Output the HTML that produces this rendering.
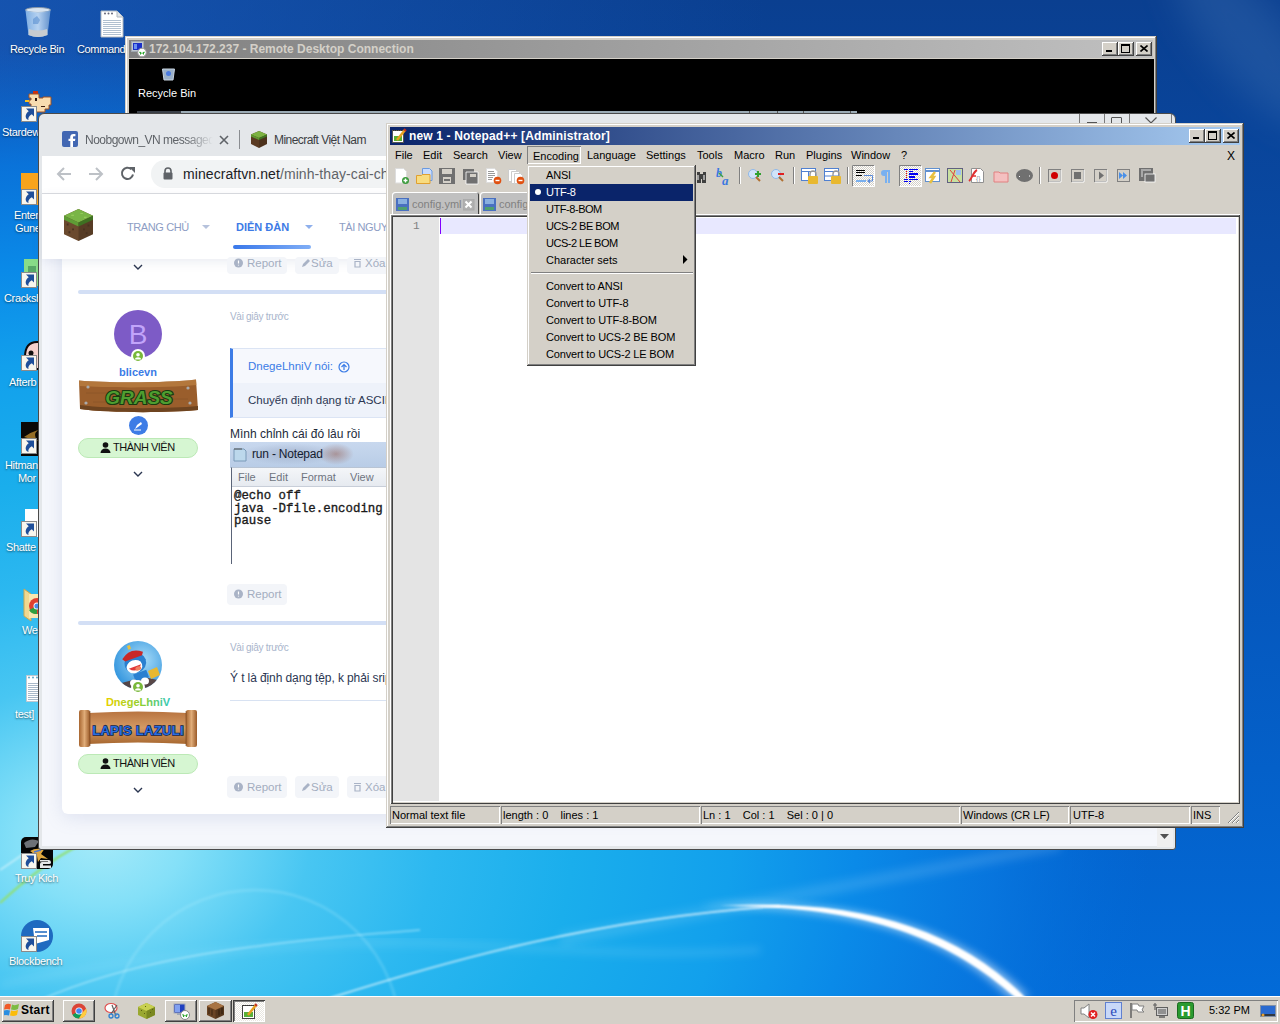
<!DOCTYPE html>
<html><head><meta charset="utf-8">
<style>
*{margin:0;padding:0;box-sizing:border-box}
html,body{width:1280px;height:1024px;overflow:hidden;font-family:"Liberation Sans",sans-serif;font-size:11px;background:#0d4aa6}
.a{position:absolute}
.t{position:absolute;white-space:nowrap;line-height:1}
.ic{position:absolute;width:80px;text-align:center;color:#fff;font-size:11px;line-height:13px;text-shadow:0 0 2px #000,0 1px 1px #000;white-space:nowrap}
.raised{background:#d4d0c8;box-shadow:inset -1px -1px #404040,inset 1px 1px #d4d0c8,inset -2px -2px #808080,inset 2px 2px #fff}
.tbtn{position:absolute;width:16px;height:14px;background:#d4d0c8;box-shadow:inset -1px -1px #404040,inset 1px 1px #fff,inset -2px -2px #808080}
.sc{position:absolute;width:16px;height:16px;background:#fff;border:1px solid #9aa;}
.sc:after{content:"";position:absolute;left:3px;top:3px;width:8px;height:8px;border-top:3px solid #1c5fb8;border-right:3px solid #1c5fb8;border-radius:0 6px 0 0}
</style></head><body>
<!-- DESKTOP BG -->
<svg class="a" style="left:0;top:0" width="1280" height="1024" viewBox="0 0 1280 1024">
<defs>
<linearGradient id="bg0" x1="0" y1="0" x2="0" y2="1">
<stop offset="0" stop-color="#0a3f90"/><stop offset="0.5" stop-color="#0654b8"/><stop offset="1" stop-color="#026cda"/></linearGradient>
<linearGradient id="bgl" x1="0" y1="0" x2="1" y2="0">
<stop offset="0" stop-color="#1a5cbc" stop-opacity="0.7"/><stop offset="0.6" stop-color="#1a5cbc" stop-opacity="0"/></linearGradient>
<radialGradient id="cy" cx="100" cy="840" r="1050" gradientUnits="userSpaceOnUse" gradientTransform="translate(100 840) scale(1 0.76) translate(-100 -840)">
<stop offset="0" stop-color="#a4eaf9"/><stop offset="0.08" stop-color="#84e0f8"/><stop offset="0.2" stop-color="#48c6f2"/><stop offset="0.32" stop-color="#2cb8f0"/><stop offset="0.45" stop-color="#1aaeec"/><stop offset="0.6" stop-color="#12a0ec"/><stop offset="0.72" stop-color="#0a8ae8"/><stop offset="0.85" stop-color="#0878e0" stop-opacity="0.85"/><stop offset="1" stop-color="#026cda" stop-opacity="0"/></radialGradient>
<filter id="bl"><feGaussianBlur stdDeviation="1.2"/></filter>
<filter id="bl4"><feGaussianBlur stdDeviation="4"/></filter>
</defs>
<rect width="1280" height="1024" fill="url(#bg0)"/>
<rect width="1280" height="1024" fill="url(#bgl)"/>
<rect width="1280" height="1024" fill="url(#cy)"/>
<circle cx="255" cy="1035" r="145" fill="none" stroke="#c8f4ff" stroke-opacity="0.18" stroke-width="3" filter="url(#bl)"/>
<path d="M0,985 C150,955 300,940 420,943 C550,948 650,958 760,950" fill="none" stroke="#c0eeff" stroke-opacity="0.2" stroke-width="5" filter="url(#bl4)"/><path d="M560,940 C700,915 880,880 1060,845" fill="none" stroke="#c0eeff" stroke-opacity="0.15" stroke-width="12" filter="url(#bl4)"/>
<path d="M40,1000 C120,965 220,945 420,930" fill="none" stroke="#d8f8ff" stroke-opacity="0.5" stroke-width="1.5" filter="url(#bl)"/><path d="M330,998 C450,960 600,918 780,906" fill="none" stroke="#fff" stroke-opacity="0.75" stroke-width="1.6" filter="url(#bl)"/>
<path d="M700,906 C850,896 960,925 1030,998 L1010,998 C945,935 860,908 700,906Z" fill="#fff" opacity="0.55" filter="url(#bl4)"/>
<path d="M720,906 C860,898 955,928 1026,998 L1016,998 C945,935 860,906 720,906Z" fill="#fff" filter="url(#bl)"/>
<path d="M0,903 C25,880 50,860 78,846" fill="none" stroke="#90e070" stroke-width="2" filter="url(#bl)"/>
<path d="M0,870 C15,860 30,850 45,838" fill="none" stroke="#fff" stroke-opacity="0.6" stroke-width="1.5" filter="url(#bl)"/>
<filter id="bl12" x="-200%" y="-100%" width="500%" height="300%"><feGaussianBlur stdDeviation="18"/></filter><ellipse cx="1250" cy="40" rx="40" ry="110" transform="rotate(-40 1250 40)" fill="#4a7ab8" opacity="0.3" filter="url(#bl12)"/>
</svg>

<!-- DESKTOP ICONS -->
<svg class="a" style="left:24px;top:7px" width="28" height="32" viewBox="0 0 28 32"><defs><linearGradient id="rb" x1="0" x2="1"><stop offset="0" stop-color="#8ab8e8"/><stop offset="0.5" stop-color="#c8e0f8"/><stop offset="1" stop-color="#6a98d0"/></linearGradient></defs><ellipse cx="14" cy="3" rx="12.5" ry="2.5" fill="#d8e4f0" stroke="#8898a8"/><path d="M1.5,3.5L4.5,28Q14,32 23.5,28L26.5,3.5Q14,7 1.5,3.5z" fill="url(#rb)" opacity="0.9"/><path d="M5,22Q14,25 23,22L23.5,28Q14,32 4.5,28z" fill="#c8ccd0"/><path d="M9,12l4,-3l3,4l-2,4l-5,0z" fill="#5a90d0" opacity="0.6"/></svg>
<div class="t" style="left:10px;top:44px;color:#fff;font-size:11px;letter-spacing:-0.35px;text-shadow:0 1px 2px rgba(0,0,0,.55)">Recycle Bin</div>
<svg class="a" style="left:100px;top:10px" width="24" height="28" viewBox="0 0 24 28"><path d="M1,1H17L23,7V27H1z" fill="#fff" stroke="#b0b8c0"/><path d="M17,1V7H23" fill="#e0e4e8" stroke="#b0b8c0"/><path d="M3,10.5H21M3,12.5H21M3,14.5H21M3,16.5H21M3,18.5H21M3,20.5H21M3,22.5H21M3,24.5H21" stroke="#b0c0d0" stroke-width="1"/><circle cx="5" cy="3.5" r="1" fill="#667"/><circle cx="8.5" cy="3.5" r="1" fill="#667"/><circle cx="12" cy="3.5" r="1" fill="#667"/></svg>
<div class="t" style="left:77px;top:44px;color:#fff;font-size:11px;letter-spacing:-0.35px;text-shadow:0 1px 2px rgba(0,0,0,.55)">Commands</div>
<svg class="a" style="left:23px;top:89px" width="30" height="26" viewBox="0 0 30 26"><path d="M10,2h5v3h-5z" fill="#d03010"/><path d="M6,5h10v4h4v-1h8v8h-2v4h-4v3h-10v-3h-4v-5h-2v-4h2v-2h-2z" fill="#f8dcb0" stroke="#a05020" stroke-width="1"/><path d="M2,11h4v2h-4z" fill="#f8c020"/><rect x="12" y="9" width="2" height="3" fill="#301810"/><path d="M18,17h4v1h-4z" fill="#402010"/></svg>
<div class="a" style="left:21px;top:106px;width:16px;height:16px;background:#f8f6ee;border:1px solid #8a8a8a"><svg style="position:absolute;left:0px;top:0px" width="14" height="14" viewBox="0 0 14 14"><path d="M4,1.5H12V9.5L9.8,7.3C7,9 5.8,11 6.5,13C3.5,12 3,9 4.5,6.5C5.2,5.5 6.2,4.6 6.8,4.3Z" fill="#1f4f9a"/></svg></div>
<div class="t" style="left:2px;top:127px;color:#fff;font-size:11px;letter-spacing:-0.35px;text-shadow:0 1px 2px rgba(0,0,0,.55)">Stardew</div>
<div class="a" style="left:21px;top:173px;width:20px;height:32px;background:#f8a41c"></div>
<div class="a" style="left:21px;top:189px;width:16px;height:16px;background:#f8f6ee;border:1px solid #8a8a8a"><svg style="position:absolute;left:0px;top:0px" width="14" height="14" viewBox="0 0 14 14"><path d="M4,1.5H12V9.5L9.8,7.3C7,9 5.8,11 6.5,13C3.5,12 3,9 4.5,6.5C5.2,5.5 6.2,4.6 6.8,4.3Z" fill="#1f4f9a"/></svg></div>
<div class="t" style="left:14px;top:210px;color:#fff;font-size:11px;letter-spacing:-0.35px;text-shadow:0 1px 2px rgba(0,0,0,.55)">Enter</div>
<div class="t" style="left:15px;top:223px;color:#fff;font-size:11px;letter-spacing:-0.35px;text-shadow:0 1px 2px rgba(0,0,0,.55)">Gune</div>
<div class="a" style="left:24px;top:259px;width:16px;height:27px;background:#88dc88"></div><div class="a" style="left:28px;top:266px;width:8px;height:16px;background:#58a868"></div>
<div class="a" style="left:21px;top:272px;width:16px;height:16px;background:#f8f6ee;border:1px solid #8a8a8a"><svg style="position:absolute;left:0px;top:0px" width="14" height="14" viewBox="0 0 14 14"><path d="M4,1.5H12V9.5L9.8,7.3C7,9 5.8,11 6.5,13C3.5,12 3,9 4.5,6.5C5.2,5.5 6.2,4.6 6.8,4.3Z" fill="#1f4f9a"/></svg></div>
<div class="t" style="left:4px;top:293px;color:#fff;font-size:11px;letter-spacing:-0.35px;text-shadow:0 1px 2px rgba(0,0,0,.55)">Cracksh</div>
<svg class="a" style="left:23px;top:339px" width="18" height="34" viewBox="0 0 18 34"><path d="M2,18Q2,3 14,3H18V30H2z" fill="#f4d0cc" stroke="#100808" stroke-width="2"/><circle cx="8" cy="14" r="2.5" fill="#101010"/></svg>
<div class="a" style="left:21px;top:355px;width:16px;height:16px;background:#f8f6ee;border:1px solid #8a8a8a"><svg style="position:absolute;left:0px;top:0px" width="14" height="14" viewBox="0 0 14 14"><path d="M4,1.5H12V9.5L9.8,7.3C7,9 5.8,11 6.5,13C3.5,12 3,9 4.5,6.5C5.2,5.5 6.2,4.6 6.8,4.3Z" fill="#1f4f9a"/></svg></div>
<div class="t" style="left:9px;top:377px;color:#fff;font-size:11px;letter-spacing:-0.35px;text-shadow:0 1px 2px rgba(0,0,0,.55)">Afterb</div>
<div class="a" style="left:21px;top:422px;width:18px;height:34px;background:#0a0806"></div><svg class="a" style="left:22px;top:428px" width="17" height="14"><path d="M2,9Q9,4 16,2Q10,7 16,13Q9,11 2,9z" fill="#b88830" opacity="0.8"/></svg>
<div class="a" style="left:21px;top:438px;width:16px;height:16px;background:#f8f6ee;border:1px solid #8a8a8a"><svg style="position:absolute;left:0px;top:0px" width="14" height="14" viewBox="0 0 14 14"><path d="M4,1.5H12V9.5L9.8,7.3C7,9 5.8,11 6.5,13C3.5,12 3,9 4.5,6.5C5.2,5.5 6.2,4.6 6.8,4.3Z" fill="#1f4f9a"/></svg></div>
<div class="t" style="left:5px;top:460px;color:#fff;font-size:11px;letter-spacing:-0.35px;text-shadow:0 1px 2px rgba(0,0,0,.55)">Hitman</div>
<div class="t" style="left:18px;top:473px;color:#fff;font-size:11px;letter-spacing:-0.35px;text-shadow:0 1px 2px rgba(0,0,0,.55)">Mor</div>
<div class="a" style="left:25px;top:509px;width:14px;height:28px;background:#fff"></div>
<div class="a" style="left:21px;top:521px;width:16px;height:16px;background:#f8f6ee;border:1px solid #8a8a8a"><svg style="position:absolute;left:0px;top:0px" width="14" height="14" viewBox="0 0 14 14"><path d="M4,1.5H12V9.5L9.8,7.3C7,9 5.8,11 6.5,13C3.5,12 3,9 4.5,6.5C5.2,5.5 6.2,4.6 6.8,4.3Z" fill="#1f4f9a"/></svg></div>
<div class="t" style="left:6px;top:542px;color:#fff;font-size:11px;letter-spacing:-0.35px;text-shadow:0 1px 2px rgba(0,0,0,.55)">Shatte</div>
<svg class="a" style="left:23px;top:588px" width="16" height="34" viewBox="0 0 16 34"><path d="M1,1L8,6V33L1,28z" fill="#f0d890" stroke="#c8a850"/><path d="M6,6H16V30H6z" fill="#f8e8b0"/><circle cx="14" cy="18" r="8" fill="#e04030"/><path d="M14,18L6,22A8,8 0 0 0 14,26z" fill="#30a040"/><circle cx="14" cy="18" r="3.5" fill="#fff"/><circle cx="14" cy="18" r="2.6" fill="#4a8ae8"/></svg>
<div class="t" style="left:22px;top:625px;color:#fff;font-size:11px;letter-spacing:-0.35px;text-shadow:0 1px 2px rgba(0,0,0,.55)">We</div>
<svg class="a" style="left:26px;top:675px" width="14" height="27" viewBox="0 0 14 27"><path d="M0.5,0.5H14V26.5H0.5z" fill="#fff" stroke="#c0c8d0"/><path d="M2,8.5H14M2,10.5H14M2,12.5H14M2,14.5H14M2,16.5H14M2,18.5H14M2,20.5H14M2,22.5H14M2,24.5H14" stroke="#a8b8c8" stroke-width="1"/><circle cx="3" cy="2.5" r="1" fill="#60a8c8"/><circle cx="7" cy="2.5" r="1" fill="#60a8c8"/><circle cx="11" cy="2.5" r="1" fill="#60a8c8"/></svg>
<div class="t" style="left:15px;top:709px;color:#fff;font-size:11px;letter-spacing:-0.35px;text-shadow:0 1px 2px rgba(0,0,0,.55)">test]</div>
<svg class="a" style="left:21px;top:837px" width="32" height="32" viewBox="0 0 32 32"><rect width="32" height="32" rx="5" fill="#050505"/><path d="M3,6Q10,0 18,4L14,10L5,11z" fill="#9aa0a8" opacity="0.7"/><path d="M9,14Q14,11 20,12L24,11L20,17L27,22L20,21L17,25L16,19z" fill="#e0a840"/><path d="M13,15L20,13" stroke="#4a78d0" stroke-width="1.5"/><path d="M19,23H28Q30,23 30,25.5Q30,27 28,27H22V28.5H30V31H19V27Q19,25 21,25H27V24.5H19z" fill="#e8e8e8"/></svg>
<div class="a" style="left:21px;top:853px;width:16px;height:16px;background:#f8f6ee;border:1px solid #8a8a8a"><svg style="position:absolute;left:0px;top:0px" width="14" height="14" viewBox="0 0 14 14"><path d="M4,1.5H12V9.5L9.8,7.3C7,9 5.8,11 6.5,13C3.5,12 3,9 4.5,6.5C5.2,5.5 6.2,4.6 6.8,4.3Z" fill="#1f4f9a"/></svg></div>
<div class="t" style="left:15px;top:873px;color:#fff;font-size:11px;letter-spacing:-0.35px;text-shadow:0 1px 2px rgba(0,0,0,.55)">Truy Kich</div>
<svg class="a" style="left:21px;top:920px" width="32" height="32" viewBox="0 0 32 32"><circle cx="16" cy="16" r="16" fill="#1e6ac0"/><path d="M12,8H28V20L14,24z" fill="#fff"/><path d="M14,12H26M16,16H26" stroke="#1e6ac0" stroke-width="1.5"/></svg>
<div class="a" style="left:21px;top:936px;width:16px;height:16px;background:#f8f6ee;border:1px solid #8a8a8a"><svg style="position:absolute;left:0px;top:0px" width="14" height="14" viewBox="0 0 14 14"><path d="M4,1.5H12V9.5L9.8,7.3C7,9 5.8,11 6.5,13C3.5,12 3,9 4.5,6.5C5.2,5.5 6.2,4.6 6.8,4.3Z" fill="#1f4f9a"/></svg></div>
<div class="t" style="left:9px;top:956px;color:#fff;font-size:11px;letter-spacing:-0.35px;text-shadow:0 1px 2px rgba(0,0,0,.55)">Blockbench</div>

<!-- RDP window -->
<div class="a raised" style="left:125px;top:36px;width:1032px;height:90px"></div>
<div class="a" style="left:129px;top:40px;width:1024px;height:18px;background:linear-gradient(90deg,#808080,#c0c0c0)"></div>
<div class="t" style="left:149px;top:43px;color:#d4d0c8;font-weight:bold;font-size:12px">172.104.172.237 - Remote Desktop Connection</div>
<div class="a" style="left:129px;top:59px;width:1025px;height:60px;background:#000"></div>
<div class="tbtn" style="left:1102px;top:42px"><div class="a" style="left:4px;top:8px;width:6px;height:2px;background:#000"></div></div>
<div class="tbtn" style="left:1118px;top:42px"><div class="a" style="left:3px;top:2px;width:9px;height:9px;border:1px solid #000;border-top-width:2px"></div></div>
<div class="tbtn" style="left:1136px;top:42px"><svg class="a" style="left:4px;top:3px" width="8" height="7"><path d="M0.5,0.5L7.5,6.5M7.5,0.5L0.5,6.5" stroke="#000" stroke-width="1.6"/></svg></div>
<div class="t" style="left:138px;top:88px;color:#fff;font-size:11px">Recycle Bin</div>
<svg class="a" style="left:162px;top:68px" width="13" height="13" viewBox="0 0 13 13"><path d="M0.5,1L2,12H11L12.5,1z" fill="#9ab0c8" stroke="#c8d4e0"/><circle cx="6.5" cy="5.5" r="2.5" fill="#4a7ae0"/></svg>
<svg class="a" style="left:131px;top:41px" width="16" height="16" viewBox="0 0 16 16"><rect x="0.5" y="0.5" width="12" height="10" fill="#c0c8d0" stroke="#a0a8b0"/><rect x="2" y="2" width="9" height="7" fill="#1a30c8"/><path d="M3,3h3v5h-3z" fill="#6a90f0"/><circle cx="11" cy="11.5" r="4.3" fill="#fff" stroke="#999"/><path d="M8.5,11l2,1.5M13.5,11l-2,1.5M9,13h1M12,13h1" stroke="#20a020" stroke-width="1.2"/></svg>
<div class="a" style="left:137px;top:111px;width:44px;height:2px;background:#3a4048"></div>
<div class="a" style="left:181px;top:111px;width:676px;height:2px;background:#9aaab4"></div><div class="a" style="left:749px;top:111px;width:1px;height:2px;background:#555"></div><div class="a" style="left:777px;top:111px;width:1px;height:2px;background:#555"></div><div class="a" style="left:803px;top:111px;width:1px;height:2px;background:#555"></div><div class="a" style="left:850px;top:111px;width:1px;height:2px;background:#555"></div>

<!-- Chrome window -->
<div class="a" style="left:38px;top:113px;width:1138px;height:737px;background:#e4e7ea;border:1px solid #4a4a4a;border-radius:6px 6px 3px 3px"></div>
<div class="a" style="left:41px;top:116px;width:1132px;height:40px;background:#e4e7ea;border-radius:4px 4px 0 0"></div>
<!-- chrome window buttons (behind npp) -->
<div class="a" style="left:1079px;top:114px;width:1px;height:10px;background:#7a7a7a"></div>
<div class="a" style="left:1104px;top:114px;width:1px;height:10px;background:#7a7a7a"></div>
<div class="a" style="left:1129px;top:114px;width:1px;height:10px;background:#7a7a7a"></div>
<div class="a" style="left:1171px;top:114px;width:1px;height:10px;background:#7a7a7a"></div>
<div class="a" style="left:1087px;top:122px;width:10px;height:1px;background:#555"></div>
<div class="a" style="left:1111px;top:117px;width:11px;height:8px;border:1px solid #555;border-radius:1px"></div>
<svg class="a" style="left:1145px;top:117px" width="12" height="7"><path d="M0.5,0.5L6,6L11.5,0.5" fill="none" stroke="#555" stroke-width="1.2"/></svg>
<!-- tabs -->
<svg class="a" style="left:62px;top:131px" width="16" height="16"><rect width="16" height="16" rx="2" fill="#4267b2"/><path d="M11,16V10h2l0.4,-2.3H11V6.3c0,-0.7 0.3,-1 1,-1h1.4V3.1c-0.3,0 -1.1,-0.1 -2,-0.1c-2,0 -3.2,1.2 -3.2,3.300V7.7H6.5V10h1.8v6z" fill="#fff"/></svg>
<div class="t" style="left:85px;top:134px;font-size:12px;letter-spacing:-0.5px;color:#5f6368;width:128px;height:16px;overflow:hidden;-webkit-mask-image:linear-gradient(90deg,#000 78%,transparent 100%)">Noobgown_VN messaged you</div>
<svg class="a" style="left:219px;top:135px" width="10" height="10"><path d="M1,1L9,9M9,1L1,9" stroke="#5f6368" stroke-width="1.6"/></svg>
<div class="a" style="left:239px;top:130px;width:1px;height:19px;background:#8a8d91"></div>
<svg class="a" style="left:251px;top:131px" width="16" height="17" viewBox="0 0 16 17"><path d="M8,0L16,3.5V13L8,17L0,13V3.5z" fill="#5a3a22"/><path d="M8,0L16,3.5L8,7L0,3.5z" fill="#7cb342"/><path d="M0,3.5L8,7V9L0,5.5z" fill="#5e9a30"/><path d="M16,3.5L8,7V9L16,5.5z" fill="#4a8a28"/><path d="M8,7V17L16,13V3.5z" fill="#000" opacity="0.15"/></svg>
<div class="t" style="left:274px;top:134px;font-size:12px;letter-spacing:-0.55px;color:#3c4043">Minecraft Việt Nam</div>
<!-- toolbar -->
<div class="a" style="left:42px;top:156px;width:1130px;height:38px;background:#fff;border-bottom:1px solid #dadce0"></div>
<svg class="a" style="left:56px;top:167px" width="16" height="14"><path d="M15,7H2M8,1L2,7L8,13" fill="none" stroke="#bdc1c6" stroke-width="2"/></svg>
<svg class="a" style="left:88px;top:167px" width="16" height="14"><path d="M1,7H14M8,1L14,7L8,13" fill="none" stroke="#bdc1c6" stroke-width="2"/></svg>
<svg class="a" style="left:120px;top:166px" width="16" height="15"><path d="M13,8.5A5.6,5.6 0 1 1 11.3,3.2" fill="none" stroke="#5f6368" stroke-width="2"/><path d="M9,1H15V7z" fill="#5f6368"/></svg>
<div class="a" style="left:151px;top:160px;width:1000px;height:28px;background:#f1f3f4;border-radius:14px"></div>
<svg class="a" style="left:163px;top:167px" width="10" height="13"><path d="M2,6V4a3,3 0 0 1 6,0v2" fill="none" stroke="#5f6368" stroke-width="1.6"/><rect x="0.5" y="5.5" width="9" height="7" rx="1" fill="#5f6368"/></svg>
<div class="t" style="left:183px;top:167px;font-size:14px;color:#202124;letter-spacing:0.08px">minecraftvn.net<span style="color:#5f6368">/minh-thay-cai-chi-ma-ko-chay</span></div>
<!-- page -->
<div class="a" style="left:42px;top:194px;width:1130px;height:652px;background:#f5f7fc;overflow:hidden">
  <div class="a" style="left:20px;top:0;width:1100px;height:620px;background:#fff;border-radius:0 0 6px 6px;box-shadow:0 4px 18px rgba(120,140,190,0.18)"></div>
</div>
<!-- header -->
<div class="a" style="left:42px;top:194px;width:1130px;height:65px;background:#fff;box-shadow:0 3px 10px rgba(90,110,160,0.12)"></div>
<svg class="a" style="left:64px;top:209px" width="29" height="32" viewBox="0 0 32 33" preserveAspectRatio="none"><path d="M16,0L32,7V26L16,33L0,26V7z" fill="#6b4a2e"/><path d="M16,0L32,7L16,14L0,7z" fill="#79b546"/><path d="M0,7L16,14V18L0,11z" fill="#5e9c35"/><path d="M32,7L16,14V18L32,11z" fill="#4c8a2a"/><path d="M16,14V33L32,26V7z" fill="#000" opacity="0.18"/><path d="M3,15h2v2h-2zM9,20h2v2h-2zM5,23h2v2h-2zM21,20h2v2h-2zM26,16h2v2h-2zM24,24h2v2h-2z" fill="#4a3220"/><path d="M8,6h3v1h-3zM18,4h3v1h-3zM22,8h3v1h-3z" fill="#9ad060"/></svg>
<div class="t" style="left:127px;top:222px;font-size:11px;color:#8d9dc4;letter-spacing:-0.4px">TRANG CHỦ</div>
<svg class="a" style="left:202px;top:225px" width="8" height="5"><path d="M0,0H8L4,4z" fill="#b6c2dc"/></svg>
<div class="t" style="left:236px;top:222px;font-size:11px;font-weight:bold;color:#3d7be6;letter-spacing:0px">DIỄN ĐÀN</div>
<svg class="a" style="left:305px;top:225px" width="8" height="5"><path d="M0,0H8L4,4z" fill="#8fb0ec"/></svg>
<div class="a" style="left:233px;top:245px;width:78px;height:4px;border-radius:2px;background:linear-gradient(90deg,#3a78ea,#80aef6)"></div>
<div class="t" style="left:339px;top:222px;font-size:11px;color:#8d9dc4;letter-spacing:-0.4px">TÀI NGUYÊN</div>

<!-- post 1 tail -->
<svg class="a" style="left:133px;top:264px" width="10" height="7"><path d="M1,1L5,5L9,1" fill="none" stroke="#2a3550" stroke-width="1.4"/></svg>
<div class="a" style="left:227px;top:257px;width:60px;height:17px;background:#f3f5f9;border-radius:4px"></div>
<div class="a" style="left:295px;top:257px;width:44px;height:17px;background:#f3f5f9;border-radius:4px"></div>
<div class="a" style="left:347px;top:257px;width:50px;height:17px;background:#f3f5f9;border-radius:4px"></div>
<svg class="a" style="left:234px;top:258px" width="10" height="10"><circle cx="4.5" cy="5" r="4.5" fill="#a9b3c6"/><path d="M4.5,2.5v3M4.5,6.8v0.8" stroke="#fff" stroke-width="1.2"/></svg>
<div class="t" style="left:247px;top:258px;font-size:11.5px;color:#a3adc0">Report</div>
<svg class="a" style="left:301px;top:258px" width="10" height="10"><path d="M1,9L2,6L7,1L9,3L4,8z" fill="#a9b3c6"/></svg>
<div class="t" style="left:311px;top:258px;font-size:11.5px;color:#a3adc0">Sửa</div>
<svg class="a" style="left:353px;top:258px" width="9" height="10"><path d="M1,1.5H8M2,3.5H7V9H2z" fill="none" stroke="#a9b3c6" stroke-width="1.2"/></svg>
<div class="t" style="left:365px;top:258px;font-size:11.5px;color:#a3adc0">Xóa</div>
<div class="a" style="left:78px;top:290px;width:320px;height:4px;border-radius:2px;background:#d3dff5"></div>

<!-- post 2 -->
<div class="a" style="left:114px;top:310px;width:48px;height:48px;border-radius:50%;background:#7d5bc6"></div>
<div class="t" style="left:114px;top:321px;width:48px;text-align:center;font-size:28px;color:#c2a4fa">B</div>
<div class="a" style="left:131px;top:349px;width:14px;height:14px;border-radius:50%;background:#fff"></div>
<svg class="a" style="left:133px;top:351px" width="10" height="10"><circle cx="5" cy="5" r="5" fill="#79b83a"/><circle cx="5" cy="3.8" r="1.8" fill="#fff"/><path d="M2,8.5a3,2.2 0 0 1 6,0z" fill="#fff"/></svg>
<div class="t" style="left:78px;top:367px;width:120px;text-align:center;font-size:11px;font-weight:bold;color:#3b7ce6">blicevn</div>
<svg class="a" style="left:78px;top:379px" width="120" height="34" viewBox="0 0 120 34">
<path d="M1,1.5C30,4 90,4 118,0.5L120,31C90,34 30,34 2,30Z" fill="#9a5e2c"/>
<path d="M1,1.5C30,4 90,4 118,0.5L118.5,6C90,9 30,9 1.5,7Z" fill="#c48848" opacity="0.6"/>
<path d="M2,26C30,30 90,30 120,27L120,31C90,34 30,34 2,30Z" fill="#6e4420"/>
<path d="M8,14H40M60,20H110M15,23H50" stroke="#8a5528" stroke-width="0.8"/>
<circle cx="10" cy="8" r="1.6" fill="#aaa"/><circle cx="110" cy="9" r="1.6" fill="#aaa"/><circle cx="8" cy="24" r="1.6" fill="#aaa"/><circle cx="112" cy="24" r="1.6" fill="#aaa"/>
<text x="61" y="25" text-anchor="middle" font-family="Liberation Sans" font-weight="bold" font-style="italic" font-size="19" fill="#4e9e30" stroke="#183a10" stroke-width="2.2" letter-spacing="0" paint-order="stroke">GRASS</text>
</svg>
<div class="a" style="left:129px;top:416px;width:19px;height:19px;border-radius:50%;background:#3d7ce6"></div>
<svg class="a" style="left:133px;top:420px" width="11" height="11"><path d="M2,9L4,5L8,2L9,4L5,7z" fill="#fff"/><path d="M1,10h7" stroke="#fff" stroke-width="1"/></svg>
<div class="a" style="left:78px;top:438px;width:120px;height:20px;border-radius:10px;background:#d6f6d2;border:1px solid #bce9b6"></div>
<svg class="a" style="left:100px;top:442px" width="11" height="11"><circle cx="5.5" cy="3" r="2.8" fill="#111"/><path d="M0.5,11a5,4.5 0 0 1 10,0z" fill="#111"/></svg>
<div class="t" style="left:113px;top:442px;font-size:11px;color:#111;letter-spacing:-0.5px">THÀNH VIÊN</div>
<svg class="a" style="left:133px;top:471px" width="10" height="7"><path d="M1,1L5,5L9,1" fill="none" stroke="#2a3550" stroke-width="1.4"/></svg>

<div class="t" style="left:230px;top:312px;font-size:10px;color:#a9b5cc;letter-spacing:-0.3px">Vài giây trước</div>
<div class="a" style="left:230px;top:348px;width:170px;height:70px;background:#eef2fa;border:1px solid #dbe4f4;border-left:3px solid #3d7ce6"></div>
<div class="a" style="left:233px;top:349px;width:167px;height:34px;background:#f6f8fd"></div>
<div class="t" style="left:248px;top:361px;font-size:11.5px;color:#3b7ce6;letter-spacing:0px">DnegeLhniV nói:</div>
<svg class="a" style="left:338px;top:361px" width="12" height="12"><circle cx="6" cy="6" r="5" fill="none" stroke="#3b7ce6" stroke-width="1.2"/><path d="M6,9V3.5M3.5,6L6,3.5L8.5,6" fill="none" stroke="#3b7ce6" stroke-width="1.2"/></svg>
<div class="t" style="left:248px;top:395px;font-size:11.5px;color:#2b3652;letter-spacing:0px">Chuyển định dạng từ ASCII</div>
<div class="t" style="left:230px;top:428px;font-size:12px;color:#222a3a;letter-spacing:0px">Mình chỉnh cái đó lâu rồi</div>
<!-- notepad screenshot -->
<div class="a" style="left:230px;top:442px;width:170px;height:26px;background:linear-gradient(180deg,#c8d8ee,#b8cce6)"></div>
<div class="a" style="left:240px;top:443px;width:100px;height:22px;background:radial-gradient(ellipse at 50% 50%,rgba(120,130,160,0.35),rgba(120,130,160,0) 70%)"></div>
<div class="a" style="left:318px;top:443px;width:36px;height:22px;background:radial-gradient(ellipse at 50% 50%,rgba(150,100,90,0.55),rgba(150,100,90,0) 70%)"></div>
<svg class="a" style="left:233px;top:447px" width="14" height="15"><path d="M1,2h10l2,2v10h-12z" fill="#bcd8ec" stroke="#7a9ab8"/><path d="M2,1v2M4,1v2M6,1v2M8,1v2" stroke="#555"/></svg>
<div class="t" style="left:252px;top:448px;font-size:12px;color:#141c30;letter-spacing:-0.2px">run - Notepad</div>
<div class="a" style="left:231px;top:467px;width:170px;height:97px;background:#fff;border-left:1px solid #5a6478;border-top:1px solid #b8c4d4"></div>
<div class="a" style="left:232px;top:468px;width:170px;height:19px;background:linear-gradient(#f4f6f9,#e6eaf0);border-bottom:1px solid #c8ced8"></div>
<div class="t" style="left:238px;top:472px;font-size:11px;color:#6e7480">File</div>
<div class="t" style="left:269px;top:472px;font-size:11px;color:#6e7480">Edit</div>
<div class="t" style="left:301px;top:472px;font-size:11px;color:#6e7480">Format</div>
<div class="t" style="left:350px;top:472px;font-size:11px;color:#6e7480">View</div>
<div class="t" style="left:234px;top:490px;font-size:12.4px;line-height:12.7px;font-family:'Liberation Mono',monospace;color:#1a1a1a;white-space:pre;-webkit-text-stroke:0.35px #1a1a1a">@echo off
java -Dfile.encoding
pause</div>
<div class="a" style="left:227px;top:584px;width:60px;height:21px;background:#f3f5f9;border-radius:4px"></div>
<svg class="a" style="left:234px;top:589px" width="10" height="10"><circle cx="4.5" cy="5" r="4.5" fill="#a9b3c6"/><path d="M4.5,2.5v3M4.5,6.8v0.8" stroke="#fff" stroke-width="1.2"/></svg>
<div class="t" style="left:247px;top:589px;font-size:11.5px;color:#a3adc0">Report</div>
<div class="a" style="left:78px;top:621px;width:320px;height:4px;border-radius:2px;background:#d3dff5"></div>

<!-- post 3 -->
<svg class="a" style="left:114px;top:641px" width="48" height="48" viewBox="0 0 48 48">
<defs><clipPath id="av"><circle cx="24" cy="24" r="24"/></clipPath><radialGradient id="avg" cx="0.6" cy="0.4" r="0.7"><stop offset="0" stop-color="#a8dcf8"/><stop offset="1" stop-color="#2a90dc"/></radialGradient></defs>
<g clip-path="url(#av)"><rect width="48" height="48" fill="url(#avg)"/>
<path d="M0,44L30,36L48,40V48H0z" fill="#5a3020" opacity="0.8"/>
<g transform="rotate(-20 22 24)">
<ellipse cx="22" cy="22" rx="11" ry="10" fill="#2a80d0"/><ellipse cx="20" cy="25" rx="8" ry="6.5" fill="#fff"/><path d="M14,25q6,8 13,0z" fill="#e03838"/><ellipse cx="23" cy="28" rx="3" ry="2" fill="#f08060"/>
<path d="M11,14q11,-9 22,0l-2,3h-18z" fill="#c82828"/><rect x="20" y="3" width="3" height="4" fill="#e8c040"/>
<rect x="16" y="32" width="14" height="8" fill="#2a80d0"/></g>
<path d="M34,30l9,-4l3,8l-9,4z" fill="#e8b830"/><ellipse cx="20" cy="42" rx="4" ry="3.5" fill="#fff"/><ellipse cx="31" cy="40" rx="4" ry="3.5" fill="#fff"/></g></svg>
<div class="a" style="left:131px;top:680px;width:14px;height:14px;border-radius:50%;background:#fff"></div>
<svg class="a" style="left:133px;top:682px" width="10" height="10"><circle cx="5" cy="5" r="5" fill="#79b83a"/><circle cx="5" cy="3.8" r="1.8" fill="#fff"/><path d="M2,8.5a3,2.2 0 0 1 6,0z" fill="#fff"/></svg>
<svg class="a" style="left:100px;top:694px" width="76" height="16"><defs><linearGradient id="ng" x1="0" x2="1"><stop offset="0" stop-color="#e8d000"/><stop offset="0.55" stop-color="#8ccf30"/><stop offset="1" stop-color="#30c8c0"/></linearGradient></defs><text x="38" y="12" text-anchor="middle" font-family="Liberation Sans" font-weight="bold" font-size="11" fill="url(#ng)" letter-spacing="0">DnegeLhniV</text></svg>
<svg class="a" style="left:78px;top:709px" width="120" height="39" viewBox="0 0 120 39">
<defs><linearGradient id="scr" x1="0" y1="0" x2="0" y2="1"><stop offset="0" stop-color="#b87440"/><stop offset="0.5" stop-color="#d49a64"/><stop offset="1" stop-color="#a86830"/></linearGradient>
<linearGradient id="rol" x1="0" y1="0" x2="1" y2="0"><stop offset="0" stop-color="#a86630"/><stop offset="0.5" stop-color="#e0ac78"/><stop offset="1" stop-color="#9a5a28"/></linearGradient></defs>
<path d="M10,4Q60,1 110,4V35Q60,32 10,35z" fill="url(#scr)"/>
<rect x="1" y="1" width="11" height="37" rx="2" fill="url(#rol)"/><rect x="108" y="1" width="11" height="37" rx="2" fill="url(#rol)"/>
<path d="M12,2V37M108,2V37" stroke="#6a3a18" stroke-width="0.8" opacity="0.7"/>
<text x="60" y="26" text-anchor="middle" font-family="Liberation Sans" font-weight="bold" font-size="13" fill="#2a6ee0" stroke="#0c2250" stroke-width="1.4" paint-order="stroke" letter-spacing="0.3">LAPIS LAZULI</text>
</svg>
<div class="a" style="left:78px;top:754px;width:120px;height:20px;border-radius:10px;background:#d6f6d2;border:1px solid #bce9b6"></div>
<svg class="a" style="left:100px;top:758px" width="11" height="11"><circle cx="5.5" cy="3" r="2.8" fill="#111"/><path d="M0.5,11a5,4.5 0 0 1 10,0z" fill="#111"/></svg>
<div class="t" style="left:113px;top:758px;font-size:11px;color:#111;letter-spacing:-0.5px">THÀNH VIÊN</div>
<svg class="a" style="left:133px;top:787px" width="10" height="7"><path d="M1,1L5,5L9,1" fill="none" stroke="#2a3550" stroke-width="1.4"/></svg>
<div class="t" style="left:230px;top:643px;font-size:10px;color:#a9b5cc;letter-spacing:-0.3px">Vài giây trước</div>
<div class="t" style="left:230px;top:672px;font-size:12px;color:#2b3652;letter-spacing:-0.1px">Ý t là định dạng tệp, k phải srip</div>
<div class="a" style="left:230px;top:700px;width:170px;height:1px;background:#d8e2f2"></div>
<div class="a" style="left:227px;top:776px;width:60px;height:22px;background:#f3f5f9;border-radius:4px"></div>
<div class="a" style="left:295px;top:776px;width:44px;height:22px;background:#f3f5f9;border-radius:4px"></div>
<div class="a" style="left:347px;top:776px;width:50px;height:22px;background:#f3f5f9;border-radius:4px"></div>
<svg class="a" style="left:234px;top:782px" width="10" height="10"><circle cx="4.5" cy="5" r="4.5" fill="#a9b3c6"/><path d="M4.5,2.5v3M4.5,6.8v0.8" stroke="#fff" stroke-width="1.2"/></svg>
<div class="t" style="left:247px;top:782px;font-size:11.5px;color:#a3adc0">Report</div>
<svg class="a" style="left:301px;top:782px" width="10" height="10"><path d="M1,9L2,6L7,1L9,3L4,8z" fill="#a9b3c6"/></svg>
<div class="t" style="left:311px;top:782px;font-size:11.5px;color:#a3adc0">Sửa</div>
<svg class="a" style="left:353px;top:782px" width="9" height="10"><path d="M1,1.5H8M2,3.5H7V9H2z" fill="none" stroke="#a9b3c6" stroke-width="1.2"/></svg>
<div class="t" style="left:365px;top:782px;font-size:11.5px;color:#a3adc0">Xóa</div>
<!-- scrollbar bottom arrow -->
<div class="a" style="left:1157px;top:826px;width:16px;height:21px;background:#efefef"></div>
<svg class="a" style="left:1160px;top:834px" width="9" height="6"><path d="M0,0H9L4.5,5z" fill="#505050"/></svg>

<!-- Notepad++ -->
<div class="a raised" style="left:386px;top:123px;width:858px;height:705px"></div>
<div class="a" style="left:390px;top:127px;width:850px;height:18px;background:linear-gradient(90deg,#0a246a,#a6caf0)"></div>
<svg class="a" style="left:391px;top:128px" width="16" height="16" viewBox="0 0 16 16">
<rect x="1.5" y="2.5" width="11" height="12" fill="#fff" stroke="#555"/>
<rect x="3" y="8" width="8" height="5" fill="#5ab030"/>
<path d="M2,2.5h10" stroke="#333" stroke-dasharray="1 1"/>
<path d="M6,12 L14,2" stroke="#e8a020" stroke-width="2.5"/><path d="M13,1 L15,3" stroke="#c03020" stroke-width="2"/>
</svg>
<div class="t" style="left:409px;top:130px;color:#fff;font-weight:bold;font-size:12px;letter-spacing:0.15px">new 1 - Notepad++ [Administrator]</div>
<div class="tbtn" style="left:1189px;top:129px"><div class="a" style="left:4px;top:8px;width:6px;height:2px;background:#000"></div></div>
<div class="tbtn" style="left:1205px;top:129px"><div class="a" style="left:3px;top:2px;width:9px;height:9px;border:1px solid #000;border-top-width:2px"></div></div>
<div class="tbtn" style="left:1223px;top:129px"><svg class="a" style="left:4px;top:3px" width="8" height="7"><path d="M0.5,0.5L7.5,6.5M7.5,0.5L0.5,6.5" stroke="#000" stroke-width="1.6"/></svg></div>
<!-- menubar -->
<div class="t" style="left:395px;top:150px">File</div>
<div class="t" style="left:423px;top:150px">Edit</div>
<div class="t" style="left:453px;top:150px">Search</div>
<div class="t" style="left:498px;top:150px">View</div>
<div class="a" style="left:527px;top:146px;width:54px;height:18px;box-shadow:inset 1px 1px #808080,inset -1px -1px #fff"></div>
<div class="t" style="left:533px;top:151px">Encoding</div>
<div class="t" style="left:587px;top:150px">Language</div>
<div class="t" style="left:646px;top:150px">Settings</div>
<div class="t" style="left:697px;top:150px">Tools</div>
<div class="t" style="left:734px;top:150px">Macro</div>
<div class="t" style="left:775px;top:150px">Run</div>
<div class="t" style="left:806px;top:150px">Plugins</div>
<div class="t" style="left:851px;top:150px">Window</div>
<div class="t" style="left:901px;top:150px">?</div>
<div class="t" style="left:1227px;top:150px;font-size:12px">X</div>
<!-- toolbar -->
<svg class="a" style="left:386px;top:164px" width="780" height="26" viewBox="386 164 780 26">
<defs><pattern id="chk" width="2" height="2" patternUnits="userSpaceOnUse"><rect width="2" height="2" fill="#fff"/><rect width="1" height="1" fill="#d4d0c8"/><rect x="1" y="1" width="1" height="1" fill="#d4d0c8"/></pattern></defs>
<!-- new -->
<path d="M395.5,168.5h8l3,3v11.5h-11z" fill="#fff" stroke="#ddd"/>
<circle cx="405.5" cy="180.5" r="3.5" fill="#3a9a3a"/><path d="M403.5,180.5h4M405.5,178.5v4" stroke="#fff" stroke-width="1.4"/>
<!-- open -->
<path d="M422.5,168.5h7l2.5,2.5v9.5h-9.5z" fill="#c8dcff" stroke="#6a9ae0"/>
<path d="M416.5,175.5h5l1,-1h7.5v9h-13.5z" fill="#f8dc80" stroke="#e0a030"/>
<!-- save -->
<path d="M439,168h16v16h-16z" fill="#707070"/><rect x="442" y="169" width="10" height="5" fill="#d4d0c8"/><rect x="443" y="177" width="8" height="6" fill="#d4d0c8"/><rect x="444" y="179" width="6" height="2" fill="#707070"/>
<!-- save all -->
<path d="M463,169h11v11h-11z" fill="#707070"/><path d="M466,172h12v12h-12z" fill="#707070" stroke="#fff" stroke-width="0.8"/><rect x="470" y="174" width="6" height="3" fill="#d4d0c8"/>
<!-- close -->
<path d="M486.5,168.5h8l3,3v11h-11z" fill="#fff" stroke="#ddd"/><path d="M488,171.5h6M488,173.5h7M488,175.5h7M488,177.5h5M488,179.5h4" stroke="#9a9a9a" stroke-width="1"/>
<circle cx="497.5" cy="180.5" r="3.8" fill="#e05010"/><path d="M495.5,180.5h4" stroke="#fff" stroke-width="1.4"/>
<!-- close all -->
<path d="M508.5,169.5h7l2,2v10h-9z" fill="#fff" stroke="#ccc"/><path d="M511.5,171.5h7l2,2v10h-9z" fill="#fff" stroke="#ccc"/><path d="M514.5,173.5h6l2,2v8h-8z" fill="#fff" stroke="#ccc"/>
<circle cx="520.5" cy="180.5" r="3.8" fill="#e05010"/><path d="M518.5,180.5h4" stroke="#fff" stroke-width="1.4"/>
<!-- find (binoculars) -->
<path d="M697,172h3v2h3v-2h3v11h-4v-4h-1v4h-4z" fill="#404040"/><rect x="697" y="175" width="2" height="5" fill="#a0a0a0"/><rect x="703" y="175" width="2" height="5" fill="#a0a0a0"/>
<!-- replace -->
<text x="716" y="177" font-family="Liberation Serif" font-style="italic" font-weight="bold" font-size="12" fill="#3a78e0">b</text><text x="722" y="185" font-family="Liberation Serif" font-style="italic" font-weight="bold" font-size="13" fill="#3a78e0">a</text><path d="M719,173l4,4" stroke="#40a040" stroke-width="1.5"/>
<path d="M739.5,167v17" stroke="#808080"/><path d="M740.5,167v17" stroke="#fff"/>
<!-- zoom in / out -->
<circle cx="753" cy="174" r="4.5" fill="#d0e4fa" stroke="#90b8e8"/><path d="M756,177l4,4" stroke="#b07030" stroke-width="2"/><path d="M755,174h6M758,171v6" stroke="#30a030" stroke-width="2"/>
<circle cx="776" cy="174" r="4.5" fill="#d0e4fa" stroke="#90b8e8"/><path d="M779,177l4,4" stroke="#b07030" stroke-width="2"/><path d="M778,174h6" stroke="#e02020" stroke-width="2"/>
<path d="M793.5,167v17" stroke="#808080"/><path d="M794.5,167v17" stroke="#fff"/>
<!-- sync -->
<rect x="801.5" y="168.5" width="14" height="12" fill="#fff" stroke="#5080d0"/><path d="M801.5,171.5h14M808.5,171.5v9" stroke="#5080d0"/>
<rect x="808" y="176" width="10" height="8" rx="1" fill="#e8b830"/><path d="M810,176v-2a3,3 0 0 1 6,0v2" fill="none" stroke="#999" stroke-width="1.4"/>
<rect x="824.5" y="168.5" width="14" height="12" fill="#fff" stroke="#5080d0"/><path d="M824.5,171.5h14M824.5,176h14" stroke="#5080d0"/>
<rect x="831" y="176" width="10" height="8" rx="1" fill="#e8b830"/><path d="M833,176v-2a3,3 0 0 1 6,0v2" fill="none" stroke="#999" stroke-width="1.4"/>
<path d="M847.5,167v17" stroke="#808080"/><path d="M848.5,167v17" stroke="#fff"/>
<!-- wrap pressed -->
<rect x="852" y="165" width="23" height="22" fill="url(#chk)"/><path d="M852.5,186.5v-21h22" fill="none" stroke="#808080"/><path d="M852.5,186.5h22v-21" fill="none" stroke="#fff"/>
<rect x="856" y="170" width="9" height="1" fill="#000"/><rect x="856" y="172" width="9" height="1" fill="#000"/><rect x="856" y="175" width="6" height="1" fill="#000"/>
<rect x="856" y="180" width="10" height="2" fill="#7ab0ee"/><path d="M864,175.5h8.5v5.5h-4" fill="none" stroke="#5a8ad8" stroke-width="1"/><path d="M870,178.5l-3,2.5l3,2.5z" fill="#5a8ad8"/>
<!-- pilcrow -->
<path d="M884,170h6v13h-2v-11h-1v11h-2v-7h-1a3,3 0 0 1 0,-6z" fill="#78b0f0"/>
<!-- indent guide pressed -->
<rect x="899" y="165" width="23" height="22" fill="url(#chk)"/><path d="M899.5,186.5v-21h22" fill="none" stroke="#808080"/><path d="M899.5,186.5h22v-21" fill="none" stroke="#fff"/>
<g fill="#0000f0"><rect x="904" y="169" width="4" height="1"/><rect x="909" y="169" width="9" height="1"/><rect x="909" y="171" width="4" height="1"/><rect x="909" y="173" width="9" height="2"/><rect x="909" y="176" width="6" height="2"/><rect x="904" y="179" width="4" height="1"/><rect x="909" y="179" width="9" height="1"/><rect x="904" y="181" width="4" height="1"/><rect x="909" y="181" width="2" height="1"/><rect x="909" y="183" width="1" height="1"/></g>
<g fill="#f00000"><rect x="906" y="171" width="1" height="1"/><rect x="906" y="173" width="1" height="1"/><rect x="906" y="175" width="1" height="1"/><rect x="906" y="177" width="1" height="1"/></g>
<!-- UDL -->
<rect x="925.5" y="168.5" width="14" height="13" fill="#fff" stroke="#6090d0"/><path d="M925.5,171h14" stroke="#6090d0" stroke-width="2"/><path d="M930,183l4,-6h-3l4,-5" stroke="#e8c040" stroke-width="2.5" fill="none"/>
<!-- doc map -->
<rect x="947.5" y="168.5" width="15" height="14" fill="#c8e0a0" stroke="#606080"/><path d="M950,170l10,12M955,170l-4,12" stroke="#e04040" stroke-width="1"/><rect x="956" y="170" width="5" height="5" fill="#a0c0f0"/>
<!-- func list -->
<path d="M971.5,168.5h9l3,3v11h-12z" fill="#fff" stroke="#909090"/><path d="M969,181c3,-2 4,-9 8,-11" stroke="#e03030" stroke-width="2" fill="none"/><path d="M973,176h3" stroke="#e03030" stroke-width="1.5"/><text x="976" y="181" font-size="7" fill="#999">{}</text>
<!-- folder workspace -->
<path d="M994,172h5l1,1h8v9h-14z" fill="#f4c0c0" stroke="#e08080"/>
<!-- oval -->
<ellipse cx="1024.5" cy="175.5" rx="8.5" ry="6.5" fill="#707070"/><path d="M1019,177l1,-1M1029,176h1" stroke="#fff"/>
<path d="M1039.5,167v17" stroke="#808080"/><path d="M1040.5,167v17" stroke="#fff"/>
<!-- macro -->
<rect x="1048.5" y="169.5" width="12" height="12" fill="none" stroke="#808080"/><path d="M1049,182h12v-12" fill="none" stroke="#fff"/><circle cx="1054.5" cy="175.5" r="3.5" fill="#d00000"/>
<rect x="1071.5" y="169.5" width="12" height="12" fill="none" stroke="#808080"/><path d="M1072,182h12v-12" fill="none" stroke="#fff"/><rect x="1074" y="172" width="7" height="7" fill="#707070"/>
<rect x="1094.5" y="169.5" width="12" height="12" fill="none" stroke="#808080"/><path d="M1095,182h12v-12" fill="none" stroke="#fff"/><path d="M1099,171.5l5,4l-5,4z" fill="#707070"/>
<rect x="1117.5" y="169.5" width="12" height="12" fill="none" stroke="#808080"/><path d="M1119,172l4,3.5l-4,3.5zM1123,172l4,3.5l-4,3.5z" fill="#4a90e8"/>
<rect x="1139" y="168" width="14" height="13" fill="#707070"/><rect x="1145" y="174" width="10" height="8" fill="#707070" stroke="#fff" stroke-width="0.8"/><path d="M1141,170h10M1141,172h2M1141,174h2M1141,176h2" stroke="#fff" stroke-width="0.8"/>
</svg>
<!-- tabs -->
<div class="a" style="left:392px;top:192px;width:87px;height:22px;background:#c0c0c0;border-radius:3px 3px 0 0;box-shadow:inset 1px 1px #fff,inset -1px 0 #404040"></div>
<svg class="a" style="left:396px;top:198px" width="14" height="14"><rect width="13" height="13" fill="#4a70c0"/><rect x="2" y="1" width="9" height="5" fill="#8ab0e0"/><rect x="2" y="9" width="9" height="3" fill="#50a070"/></svg>
<div class="t" style="left:412px;top:199px;color:#808080;font-size:11px">config.yml</div>
<svg class="a" style="left:463px;top:199px" width="12" height="12"><rect width="11" height="11" fill="#b0b0b0" stroke="#a8a8a8"/><path d="M2.5,2.5l6,6M8.5,2.5l-6,6" stroke="#fff" stroke-width="2"/></svg>
<div class="a" style="left:480px;top:192px;width:60px;height:22px;background:#c0c0c0;border-radius:3px 3px 0 0;box-shadow:inset 1px 1px #fff"></div>
<svg class="a" style="left:483px;top:198px" width="14" height="14"><rect width="13" height="13" fill="#4a70c0"/><rect x="2" y="1" width="9" height="5" fill="#8ab0e0"/><rect x="2" y="9" width="9" height="3" fill="#50a070"/></svg>
<div class="t" style="left:499px;top:199px;color:#808080;font-size:11px">config</div>
<!-- editor -->
<div class="a" style="left:390px;top:214px;width:850px;height:590px;box-shadow:inset 1px 1px #fff,inset -1px -1px #404040"></div>
<div class="a" style="left:391px;top:215px;width:848px;height:588px;background:#fff;box-shadow:inset 1px 1px #808080,inset 2px 2px #404040,inset -1px -1px #d4d0c8,inset -2px -2px #fff"></div>
<div class="a" style="left:393px;top:217px;width:46px;height:584px;background:#e4e4e4"></div>
<div class="a" style="left:440px;top:218px;width:796px;height:16px;background:#e8e8ff"></div>
<div class="a" style="left:440px;top:218px;width:1px;height:16px;background:#8000ff"></div>
<div class="t" style="left:413px;top:221px;color:#808080;font-size:11px;font-family:'Liberation Mono',monospace">1</div>
<!-- status bar -->
<div class="a" style="left:390px;top:806px;width:110px;height:18px;box-shadow:inset 1px 1px #808080,inset -1px -1px #fff"></div>
<div class="a" style="left:501px;top:806px;width:199px;height:18px;box-shadow:inset 1px 1px #808080,inset -1px -1px #fff"></div>
<div class="a" style="left:701px;top:806px;width:259px;height:18px;box-shadow:inset 1px 1px #808080,inset -1px -1px #fff"></div>
<div class="a" style="left:961px;top:806px;width:108px;height:18px;box-shadow:inset 1px 1px #808080,inset -1px -1px #fff"></div>
<div class="a" style="left:1070px;top:806px;width:120px;height:18px;box-shadow:inset 1px 1px #808080,inset -1px -1px #fff"></div>
<div class="a" style="left:1191px;top:806px;width:29px;height:18px;box-shadow:inset 1px 1px #808080,inset -1px -1px #fff"></div>
<div class="t" style="left:392px;top:810px">Normal text file</div>
<div class="t" style="left:503px;top:810px">length : 0&nbsp;&nbsp;&nbsp; lines : 1</div>
<div class="t" style="left:703px;top:810px">Ln : 1&nbsp;&nbsp;&nbsp; Col : 1&nbsp;&nbsp;&nbsp; Sel : 0 | 0</div>
<div class="t" style="left:963px;top:810px">Windows (CR LF)</div>
<div class="t" style="left:1073px;top:810px">UTF-8</div>
<div class="t" style="left:1193px;top:810px">INS</div>
<svg class="a" style="left:1226px;top:810px" width="14" height="14"><path d="M13,2L2,13M13,6L6,13M13,10L10,13" stroke="#808080" stroke-width="1"/><path d="M13,3L3,13M13,7L7,13M13,11L11,13" stroke="#fff" stroke-width="1"/></svg>

<!-- Menu -->
<div class="a raised" style="left:527px;top:165px;width:169px;height:201px"></div>
<div class="a" style="left:530px;top:184px;width:163px;height:17px;background:#0a246a"></div>
<div class="a" style="left:535px;top:189px;width:6px;height:6px;border-radius:50%;background:#fff"></div>
<div class="t" style="left:546px;top:170px;color:#000;letter-spacing:-0.2px">ANSI</div>
<div class="t" style="left:546px;top:187px;color:#fff;letter-spacing:-0.3px">UTF-8</div>
<div class="t" style="left:546px;top:204px;color:#000;letter-spacing:-0.45px">UTF-8-BOM</div>
<div class="t" style="left:546px;top:221px;color:#000;letter-spacing:-0.5px">UCS-2 BE BOM</div>
<div class="t" style="left:546px;top:238px;color:#000;letter-spacing:-0.5px">UCS-2 LE BOM</div>
<div class="t" style="left:546px;top:255px;color:#000">Character sets</div>
<svg class="a" style="left:683px;top:255px" width="6" height="9"><path d="M0,0L4.5,4.5L0,9z" fill="#000"/></svg>
<div class="a" style="left:531px;top:272px;width:162px;height:1px;background:#808080"></div><div class="a" style="left:531px;top:273px;width:162px;height:1px;background:#fff"></div>
<div class="t" style="left:546px;top:281px;letter-spacing:-0.15px">Convert to ANSI</div>
<div class="t" style="left:546px;top:298px;letter-spacing:-0.15px">Convert to UTF-8</div>
<div class="t" style="left:546px;top:315px;letter-spacing:-0.15px">Convert to UTF-8-BOM</div>
<div class="t" style="left:546px;top:332px;letter-spacing:-0.15px">Convert to UCS-2 BE BOM</div>
<div class="t" style="left:546px;top:349px;letter-spacing:-0.15px">Convert to UCS-2 LE BOM</div>

<!-- Taskbar -->
<div class="a" style="left:0;top:996px;width:1280px;height:28px;background:#d4d0c8;box-shadow:inset 0 1px #fff"></div>
<div class="a" style="left:2px;top:1000px;width:52px;height:22px;background:#d4d0c8;box-shadow:inset -1px -1px #404040,inset 1px 1px #fff,inset -2px -2px #808080"></div>
<svg class="a" style="left:4px;top:1002px" width="16" height="16" viewBox="0 0 16 16"><path d="M1,3Q4,1 7,2.5L6,7.5Q3,6.5 0,7.5z" fill="#f05a28"/><path d="M8,2.5Q11,4 15,2L14,7Q11,8.5 7,7.5z" fill="#7cbb42"/><path d="M0,8.5Q3,7.5 6,8.5L5,13.5Q2,12.5 -1,13.5z" fill="#2a8ee0"/><path d="M7,8.5Q10,9.5 14,8L13,13Q10,14.5 6,13.5z" fill="#fbbc09"/></svg>
<div class="t" style="left:21px;top:1004px;font-weight:bold;font-size:12px;color:#000;letter-spacing:0.3px">Start</div>
<div class="a" style="left:63px;top:1000px;width:32px;height:22px;background:#d4d0c8;box-shadow:inset -1px -1px #404040,inset 1px 1px #fff,inset -2px -2px #808080"></div>
<svg class="a" style="left:71px;top:1003px" width="16" height="16" viewBox="0 0 16 16"><circle cx="8" cy="8" r="7.5" fill="#db4437"/><path d="M8,8L1.5,11.8A7.5,7.5 0 0 0 8,15.5L11.5,9.5z" fill="#0f9d58"/><path d="M15.2,5.5A7.5,7.5 0 0 1 8,15.5L11.5,9.5z" fill="#ffcd40"/><circle cx="8" cy="8" r="3.6" fill="#fff"/><circle cx="8" cy="8" r="2.8" fill="#4285f4"/></svg>
<svg class="a" style="left:104px;top:1002px" width="17" height="17" viewBox="0 0 17 17"><ellipse cx="7" cy="6" rx="6" ry="4.5" fill="#fff" stroke="#e05050" stroke-width="1.2"/><path d="M8,3L12,14M13,3L7,12" stroke="#606060" stroke-width="1.2"/><circle cx="7" cy="14" r="2" fill="none" stroke="#3080d0" stroke-width="1.3"/><circle cx="13" cy="14" r="2" fill="none" stroke="#3080d0" stroke-width="1.3"/></svg>
<svg class="a" style="left:138px;top:1003px" width="17" height="16" viewBox="0 0 17 16"><path d="M8.5,0L17,4V12L8.5,16L0,12V4z" fill="#9aa830"/><path d="M8.5,0L17,4L8.5,8L0,4z" fill="#c8d050"/><path d="M8.5,8V16L17,12V4z" fill="#7a8820"/><path d="M3,7h1v1h-1zM6,10h1v1h-1zM12,9h1v1h-1zM14,6h1v1h-1zM7,3h1v1h-1z" fill="#5a6010"/></svg>
<div class="a" style="left:165px;top:1000px;width:32px;height:22px;background:#d4d0c8;box-shadow:inset -1px -1px #404040,inset 1px 1px #fff,inset -2px -2px #808080"></div>
<svg class="a" style="left:173px;top:1003px" width="17" height="17" viewBox="0 0 17 17"><rect x="1" y="1" width="11" height="9" fill="#2040c0" stroke="#a0a8b8"/><path d="M2,2h5v7h-5z" fill="#80a0f0"/><rect x="4" y="10" width="5" height="2" fill="#a0a8b8"/><circle cx="12" cy="12" r="4.5" fill="#fff" stroke="#888"/><path d="M9.5,11.5l2,1.5M14.5,11.5l-2,1.5M10,13.5h1M13,13.5h1" stroke="#20a020" stroke-width="1.2"/></svg>
<div class="a" style="left:199px;top:1000px;width:33px;height:22px;background:#d4d0c8;box-shadow:inset -1px -1px #404040,inset 1px 1px #fff,inset -2px -2px #808080"></div>
<svg class="a" style="left:207px;top:1002px" width="17" height="17" viewBox="0 0 17 17"><path d="M8.5,0L17,4V13L8.5,17L0,13V4z" fill="#6a4424"/><path d="M8.5,0L17,4L8.5,8L0,4z" fill="#a87444"/><path d="M2,6v6M5,7.5v6M12,7.5v6M15,6v6" stroke="#3a2410" stroke-width="1"/><path d="M8.5,8V17L17,13V4z" fill="#000" opacity="0.2"/></svg>
<div class="a" style="left:233px;top:1000px;width:32px;height:22px;background:repeating-conic-gradient(#fff 0 25%,#e8e6e0 0 50%) 0 0/2px 2px;box-shadow:inset 1px 1px #404040,inset -1px -1px #fff,inset 2px 2px #808080"></div>
<svg class="a" style="left:241px;top:1003px" width="17" height="17" viewBox="0 0 17 17"><rect x="1.5" y="2.5" width="12" height="13" fill="#fff" stroke="#444"/><rect x="3" y="9" width="9" height="5" fill="#58b038"/><path d="M2,2.5h11" stroke="#333" stroke-dasharray="1 1"/><path d="M7,12L15,2" stroke="#e8a020" stroke-width="2.5"/><path d="M14,1L16,3" stroke="#c03020" stroke-width="2"/></svg>
<!-- tray -->
<div class="a" style="left:1074px;top:1000px;width:204px;height:22px;box-shadow:inset 1px 1px #808080,inset -1px -1px #fff"></div>
<svg class="a" style="left:1080px;top:1002px" width="18" height="18" viewBox="0 0 18 18"><path d="M1,6h3l5,-4v14l-5,-4h-3z" fill="#fff" stroke="#808080"/><circle cx="13" cy="12.5" r="4.5" fill="#e02020"/><path d="M11,10.5l4,4M15,10.5l-4,4" stroke="#fff" stroke-width="1.5"/></svg>
<svg class="a" style="left:1105px;top:1002px" width="17" height="17" viewBox="0 0 17 17"><rect x="0.5" y="0.5" width="16" height="16" fill="#c8d8f8" stroke="#6080d0"/><text x="8.5" y="14" text-anchor="middle" font-family="Liberation Serif" font-size="15" fill="#2a48b8">e</text></svg>
<svg class="a" style="left:1129px;top:1002px" width="16" height="17" viewBox="0 0 16 17"><path d="M2,1V16" stroke="#606060" stroke-width="1.5"/><path d="M3,2h6l1,2h5l-2,4l2,2h-6l-1,-2h-5z" fill="#fff" stroke="#808080"/></svg>
<svg class="a" style="left:1152px;top:1002px" width="17" height="17" viewBox="0 0 17 17"><path d="M3,1v7M1,3h4" stroke="#606060" stroke-width="1.2"/><rect x="4.5" y="5.5" width="11" height="8" fill="#d0d0d0" stroke="#606060"/><rect x="6" y="7" width="8" height="5" fill="#909090"/><path d="M7,15h6" stroke="#606060" stroke-width="1.5"/></svg>
<svg class="a" style="left:1177px;top:1002px" width="17" height="17" viewBox="0 0 17 17"><rect x="0.5" y="0.5" width="16" height="16" rx="2" fill="#2a9a30" stroke="#1a6a20"/><text x="8.5" y="14" text-anchor="middle" font-family="Liberation Sans" font-weight="bold" font-size="14" fill="#fff">H</text></svg>
<div class="t" style="left:1209px;top:1005px;font-size:11px;color:#000">5:32 PM</div>
<svg class="a" style="left:1260px;top:1003px" width="16" height="16" viewBox="0 0 16 16"><rect x="0.5" y="2.5" width="15" height="11" fill="#2a6ad0" stroke="#8090a8"/><path d="M1,12h14" stroke="#303840" stroke-width="2"/><circle cx="3" cy="12" r="1.5" fill="#e8a030"/></svg>
</body></html>
